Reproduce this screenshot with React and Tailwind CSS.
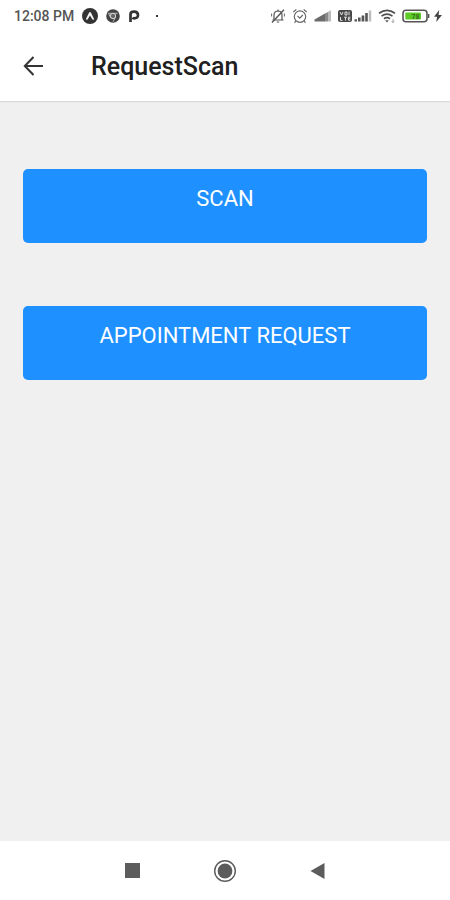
function ExpoIcon() {
  return (
    <svg className="h-4 w-4" viewBox="0 0 16 16" aria-hidden="true">
      <circle cx="8" cy="8" r="8" fill="#333333" />
      <path d="M3.8 11.3 7 4.8Q8 3.4 9 4.8l3.2 6.5q-.9 1-1.9-.1L8 7.6l-2.3 3.6q-1 1.1-1.9.1Z" fill="#f4f4f4" />
    </svg>
  );
}

function ChromeIcon() {
  return (
    <svg className="h-3.5 w-3.5" viewBox="0 0 14 14" aria-hidden="true">
      <circle cx="7" cy="7" r="6.8" fill="#444444" />
      <circle cx="7" cy="7" r="2.7" fill="#666666" stroke="#d8d8d8" strokeWidth="1" />
      <path d="M2.6 4.3h9M4.6 8.4 2.4 4.4M9.5 8.3 7 12.8" stroke="#c8c8c8" strokeWidth="0.9" fill="none" />
    </svg>
  );
}

function ParkIcon() {
  return (
    <svg className="h-3.5 w-3" viewBox="0 0 12 14" aria-hidden="true">
      <path d="M2.5 13V5.4Q2.5 2.6 6 2.6 10 2.6 10 6T6 9.3Q5 9.3 4.4 8.8" fill="none" stroke="#333333" strokeWidth="2.7" />
    </svg>
  );
}

function MutedBellIcon() {
  return (
    <svg className="h-4 w-4" viewBox="0 0 16 16" fill="none" stroke="#555555" strokeWidth="1.2" aria-hidden="true">
      <path d="M2.5 12h11M4 12V7q0-3.8 4-4 4 .2 4 4v5M6.8 14h2.4M8 3V1.6" />
      <path d="M14 1.8 2 14.5" strokeWidth="1.4" />
      <path d="M1.6 5.5v3M14.4 5.5v3" strokeWidth="0.9" />
    </svg>
  );
}

function AlarmIcon() {
  return (
    <svg className="h-4 w-4" viewBox="0 0 16 16" fill="none" stroke="#666666" strokeWidth="1.2" aria-hidden="true">
      <circle cx="8" cy="8.6" r="5.7" />
      <path d="m5.5 7.8 2.3 2.3 3-3.1M1.3 4 4.3 1.4M14.7 4l-3-2.6M3.9 13l-1.4 1.6M12.1 13l1.4 1.6" />
    </svg>
  );
}

function SignalRampIcon() {
  return (
    <svg className="h-3 w-4.5" viewBox="0 0 18 12" aria-hidden="true">
      <path d="M.5 11.5V9.6L4 7.6v3.9ZM4 11.5V7.4l3.5-1.8v5.9ZM7.5 11.5V5.4L11 3.6v7.9Z" fill="#6c6c6c" />
      <path d="M11 11.5v-8L14 1.9v9.6Z" fill="#8a8a8a" />
      <path d="M14 11.5V1.8L17 .3v11.2Z" fill="#bbbbbb" />
    </svg>
  );
}

function VolteIcon() {
  return (
    <svg className="h-3.5 w-3.5" viewBox="0 0 14 14" aria-hidden="true">
      <rect y="1" width="14" height="12" rx="2" fill="#484848" />
      <path d="m2 3 1.5 3L5 3M7 3h2v3H7ZM11 2.6v3.6M2.5 8v3.4h2M6 8.2h3M7.5 8.2v3.4M12.4 8.2h-2v3h2M10.4 9.7h1.8" fill="none" stroke="#eeeeee" strokeWidth="0.9" />
    </svg>
  );
}

function SignalBarsIcon() {
  return (
    <svg className="h-3 w-4.5" viewBox="0 0 18 12" aria-hidden="true">
      <path d="M.5 9.3H3v2.2H.5ZM4 7.6h2.6v3.9H4ZM7.6 5.4h2.7v6.1H7.6ZM11.2 3h2.6v8.5h-2.6Z" fill="#555555" />
      <path d="M14.8.5h2.4v11h-2.4Z" fill="#bbbbbb" />
    </svg>
  );
}

function WifiIcon() {
  return (
    <svg className="h-4 w-4.5" viewBox="0 0 18 16" fill="none" stroke="#505050" strokeWidth="1.7" aria-hidden="true">
      <path d="M1 5.3Q9-.6 17 5.3M3.5 8.1q5.5-4 11 0M6 10.8q3-2.2 6 0" />
      <path d="M7.2 12.2h3.6L9 14.6Z" fill="#505050" stroke="none" />
      <path d="M15 11v3.5m-1.3-1.3 1.3 1.5 1.3-1.5" stroke="#999999" strokeWidth="0.9" />
    </svg>
  );
}

function BatteryIcon() {
  return (
    <svg className="h-3.5 w-7" viewBox="0 0 28 14" aria-hidden="true">
      <rect x="1" y="1.2" width="24" height="11.6" rx="3" fill="#ffffff" stroke="#555555" strokeWidth="1.6" />
      <rect x="3.3" y="3.5" width="15.7" height="7" rx="1" fill="#5ccb25" />
      <path d="M26 5h1.4v4H26Z" fill="#555555" />
      <text x="13.5" y="9.6" textAnchor="middle" fontSize="7" fontWeight="700" fill="#326d1b">78</text>
    </svg>
  );
}

function BoltIcon() {
  return (
    <svg className="h-3 w-2" viewBox="0 0 8 12" aria-hidden="true">
      <path d="M5.2 0 0 6.7h3.1L2.2 12 8 5H4.6Z" fill="#444444" />
    </svg>
  );
}

function StatusBar() {
  return (
    <div className="flex h-8 items-center justify-between pr-2 pl-3.5">
      <div className="flex items-center">
        <span className="text-sm leading-8 font-medium text-[#555555]">12:08 PM</span>
        <div className="ml-2 flex items-center gap-2">
          <ExpoIcon />
          <ChromeIcon />
          <ParkIcon />
        </div>
        <span className="ml-4 h-0.5 w-0.5 bg-[#333333]" />
      </div>
      <div className="flex items-center gap-1.5">
        <div className="flex items-center gap-1.5">
          <MutedBellIcon />
          <AlarmIcon />
          <SignalRampIcon />
        </div>
        <div className="flex items-center gap-0.5">
          <VolteIcon />
          <SignalBarsIcon />
        </div>
        <WifiIcon />
        <div className="flex items-center gap-1">
          <BatteryIcon />
          <BoltIcon />
        </div>
      </div>
    </div>
  );
}

function Header() {
  return (
    <header className="flex h-[69px] items-center pl-[22px]">
      <button type="button" aria-label="Go back" className="flex h-6 w-6 items-center justify-center">
        <svg className="h-6 w-6" viewBox="0 0 24 24" fill="none" stroke="#333333" strokeWidth="2" aria-hidden="true">
          <path d="M21 11H3M11.5 2l-8.7 9 8.7 9" />
        </svg>
      </button>
      <h1 className="ml-[45px] text-[25px] leading-8 font-medium text-[#202020]">RequestScan</h1>
    </header>
  );
}

function ActionButton({ children }) {
  return (
    <button
      type="button"
      className="flex h-[74px] w-full items-start justify-center rounded-[5px] bg-[#1e90ff] pt-3.5 text-[22px] leading-8 text-white"
    >
      {children}
    </button>
  );
}

function NavBar() {
  return (
    <nav className="flex h-[59px] items-center justify-center gap-[69px] bg-white">
      <button type="button" aria-label="Recent apps" className="flex h-6 w-6 items-center justify-center">
        <span className="h-[15px] w-[15px] bg-[#5c5c5c]" />
      </button>
      <button type="button" aria-label="Home" className="flex h-6 w-6 items-center justify-center">
        <svg className="h-6 w-6" viewBox="0 0 24 24" aria-hidden="true">
          <circle cx="12" cy="12" r="10.3" fill="none" stroke="#5c5c5c" strokeWidth="1.4" />
          <circle cx="12" cy="12" r="7.4" fill="#5c5c5c" />
        </svg>
      </button>
      <button type="button" aria-label="Back" className="flex h-6 w-6 items-center justify-center">
        <svg className="h-4 w-4" viewBox="0 0 16 16" aria-hidden="true">
          <path d="M14.5 0v16L.5 8Z" fill="#5c5c5c" />
        </svg>
      </button>
    </nav>
  );
}

export default function App() {
  return (
    <div className="flex min-h-screen flex-col bg-[#f0f0f0] font-['Roboto',sans-serif]">
      <div className="bg-white shadow-[0_0_2px_rgba(0,0,0,0.3)]">
        <StatusBar />
        <Header />
      </div>
      <main className="flex flex-1 flex-col gap-[63px] px-[23px] pt-[68px]">
        <ActionButton>SCAN</ActionButton>
        <ActionButton>APPOINTMENT REQUEST</ActionButton>
      </main>
      <NavBar />
    </div>
  );
}
